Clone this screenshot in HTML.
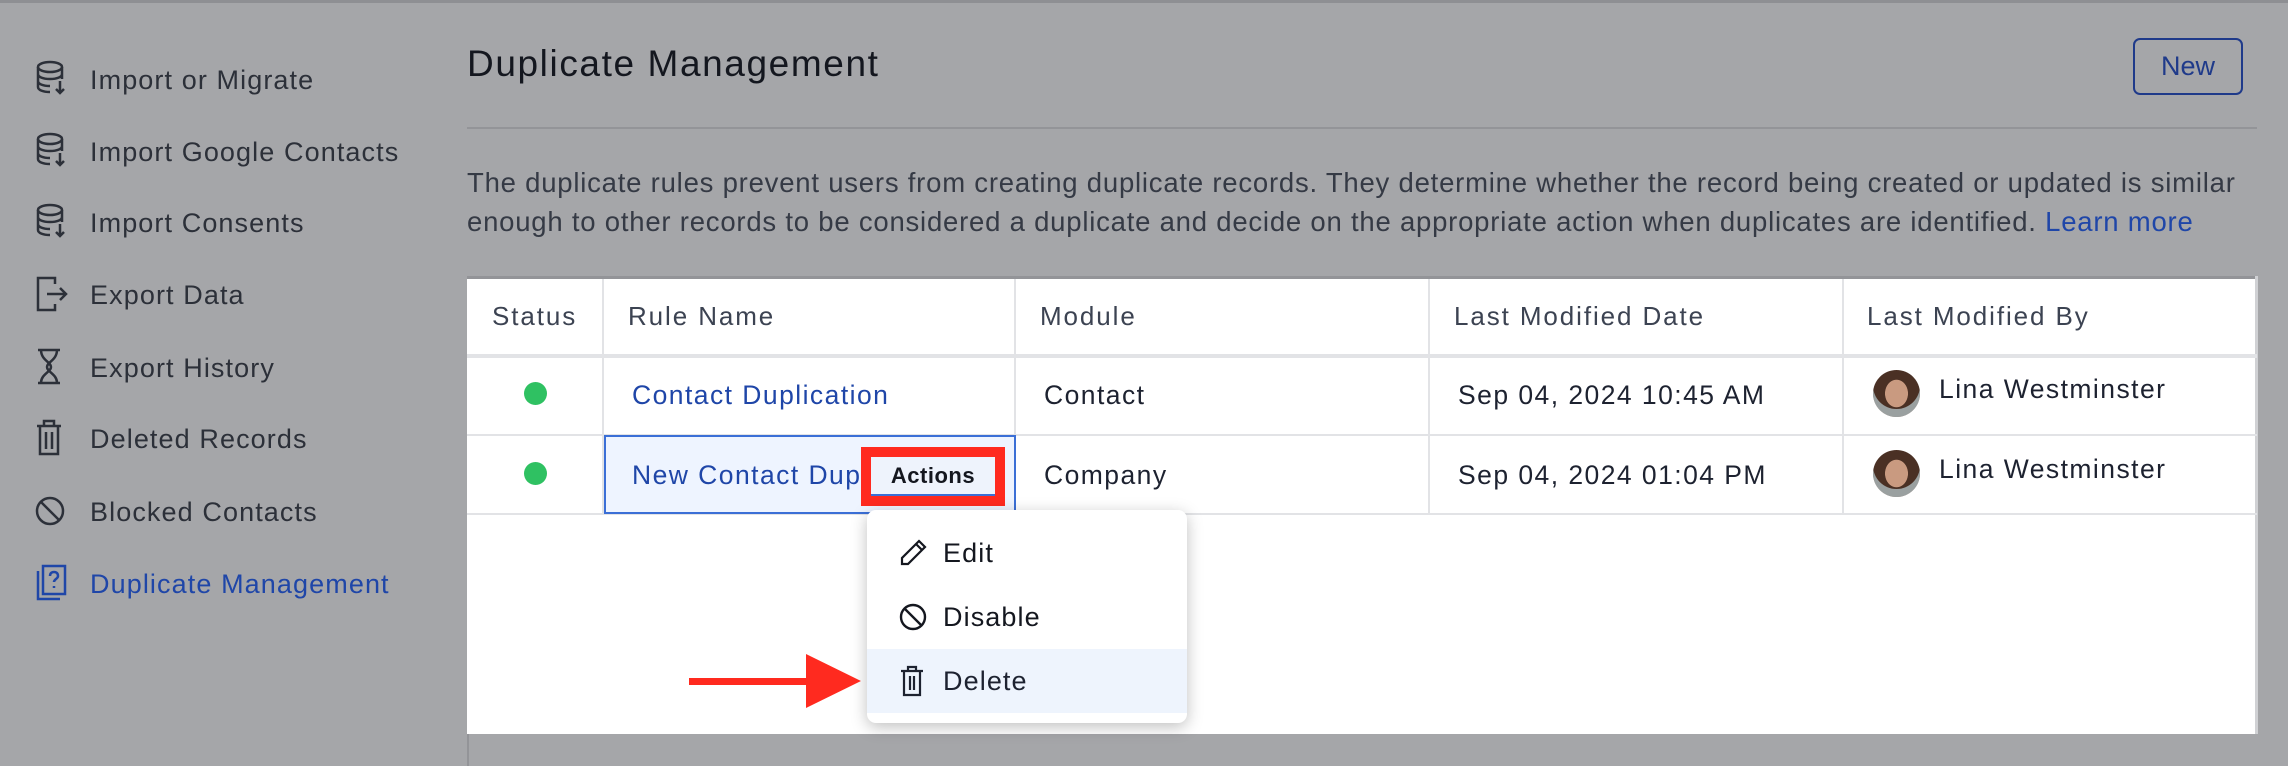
<!DOCTYPE html>
<html><head><meta charset="utf-8"><style>
*{box-sizing:border-box;margin:0;padding:0}
body{width:2288px;height:766px;overflow:hidden;background:#a5a6a9;font-family:"Liberation Sans",sans-serif;position:relative;color:#1d2230;letter-spacing:1.1px}
.abs{position:absolute;white-space:nowrap}
.top{left:0;top:0;width:2288px;height:3px;background:#8e8f93}
.side{left:35px;font-size:27px;color:#2c3039}
.side svg{position:absolute;left:0;top:-4px}
.side span{position:absolute;left:55px;top:0;line-height:34px}
h1{position:absolute;left:467px;top:43px;font-size:37px;font-weight:normal;color:#14171f;letter-spacing:1.6px}
.new{left:2133px;top:38px;width:110px;height:57px;border:2px solid #1f3a8a;border-radius:7px;color:#1f3a8a;font-size:27px;text-align:center;line-height:52px;letter-spacing:0}
.sep{left:467px;top:127px;width:1790px;height:2px;background:#939498}
.para{left:467px;top:163px;font-size:27.5px;line-height:39px;color:#353a45;letter-spacing:0.78px}
.para a{color:#1f46a8;text-decoration:none}
.tbl{left:467px;top:276px;width:1790px;height:458px;background:#fff;border-top:3px solid #939498}
.vl{background:#e2e3e6;width:2px}
.hl{background:#e2e3e6;height:2px}
.hd{font-size:26px;color:#3c4352;top:301px;letter-spacing:1.9px}
.cell{font-size:26.5px;color:#1d2230;letter-spacing:1.45px}
.link{color:#1f46a8}
.dot{width:23px;height:23px;border-radius:50%;background:#2fc162}
.av{width:47px;height:47px;border-radius:50%;background:radial-gradient(ellipse 40% 48% at 50% 50%,#c99a80 0 60%,#4a3024 62% 100%),#9aa0a0;background-size:100% 100%;box-shadow:inset 0 -8px 0 #9aa0a0}
.menu{left:867px;top:510px;width:320px;height:213px;background:#fff;border-radius:9px;box-shadow:0 4px 16px rgba(0,0,0,.25)}
.mi{font-size:27px;color:#14171f;left:943px;letter-spacing:1.1px}
</style></head><body>
<div class="abs top"></div>

<div class="abs side" style="top:63px"><svg width="34" height="40" viewBox="0 0 34 40" fill="none" stroke="#2c3039" stroke-width="2.5"><ellipse cx="15" cy="8" rx="12" ry="5"/><path d="M3 8v20c0 3 5 5 12 5M27 8v12M3 15c0 3 5 5 12 5s12-2 12-5M3 22c0 3 5 5 12 5"/><path d="M25 22v12M21 30l4 4 4-4"/></svg><span>Import or Migrate</span></div>
<div class="abs side" style="top:135px"><svg width="34" height="40" viewBox="0 0 34 40" fill="none" stroke="#2c3039" stroke-width="2.5"><ellipse cx="15" cy="8" rx="12" ry="5"/><path d="M3 8v20c0 3 5 5 12 5M27 8v12M3 15c0 3 5 5 12 5s12-2 12-5M3 22c0 3 5 5 12 5"/><path d="M25 22v12M21 30l4 4 4-4"/></svg><span>Import Google Contacts</span></div>
<div class="abs side" style="top:206px"><svg width="34" height="40" viewBox="0 0 34 40" fill="none" stroke="#2c3039" stroke-width="2.5"><ellipse cx="15" cy="8" rx="12" ry="5"/><path d="M3 8v20c0 3 5 5 12 5M27 8v12M3 15c0 3 5 5 12 5s12-2 12-5M3 22c0 3 5 5 12 5"/><path d="M25 22v12M21 30l4 4 4-4"/></svg><span>Import Consents</span></div>
<div class="abs side" style="top:278px"><svg width="34" height="40" viewBox="0 0 34 40" fill="none" stroke="#2c3039" stroke-width="2.5"><path d="M20 10V4H3v32h17v-6M12 20h19M25 14l6 6-6 6"/></svg><span>Export Data</span></div>
<div class="abs side" style="top:351px"><svg width="34" height="40" viewBox="0 0 34 40" fill="none" stroke="#2c3039" stroke-width="2.5"><path d="M3 3h22M3 36h22M6 3c0 10 10 12 10 17S6 27 6 36M22 3c0 10-10 12-10 17s10 7 10 16"/></svg><span>Export History</span></div>
<div class="abs side" style="top:422px"><svg width="34" height="40" viewBox="0 0 34 40" fill="none" stroke="#2c3039" stroke-width="2.5"><path d="M2 8h24M9 8V3h10v5M5 8v28h18V8M11 14v17M17 14v17"/></svg><span>Deleted Records</span></div>
<div class="abs side" style="top:495px"><svg width="34" height="40" viewBox="0 0 34 40" fill="none" stroke="#2c3039" stroke-width="2.5"><circle cx="15" cy="20" r="13"/><path d="M6 11l18 18"/></svg><span>Blocked Contacts</span></div>
<div class="abs side" style="top:567px;color:#1f46a8"><svg width="34" height="40" viewBox="0 0 34 40" fill="none" stroke="#1f46a8" stroke-width="2.5"><path d="M3 8v28h22"/><rect x="8" y="3" width="22" height="28"/><path d="M15 13c0-3 2-4 4-4s4 1 4 4-4 3-4 6M19 23v2"/></svg><span>Duplicate Management</span></div>

<h1>Duplicate Management</h1>
<div class="abs new">New</div>
<div class="abs sep"></div>
<div class="abs para">The duplicate rules prevent users from creating duplicate records. They determine whether the record being created or updated is similar<br>enough to other records to be considered a duplicate and decide on the appropriate action when duplicates are identified. <a>Learn more</a></div>

<div class="abs tbl"></div>
<div class="abs" style="left:467px;top:734px;width:2px;height:32px;background:#939498"></div>
<div class="abs" style="left:2255px;top:276px;width:3px;height:458px;background:#d0d1d4"></div>
<div class="abs hl" style="left:467px;top:354px;width:1790px;height:4px"></div>
<div class="abs hl" style="left:467px;top:434px;width:1790px"></div>
<div class="abs hl" style="left:467px;top:513px;width:1790px"></div>
<div class="abs vl" style="left:602px;top:279px;height:235px"></div>
<div class="abs vl" style="left:1014px;top:279px;height:235px"></div>
<div class="abs vl" style="left:1428px;top:279px;height:235px"></div>
<div class="abs vl" style="left:1842px;top:279px;height:235px"></div>

<div class="abs hd" style="left:492px">Status</div>
<div class="abs hd" style="left:628px">Rule Name</div>
<div class="abs hd" style="left:1040px">Module</div>
<div class="abs hd" style="left:1454px">Last Modified Date</div>
<div class="abs hd" style="left:1867px">Last Modified By</div>

<div class="abs dot" style="left:524px;top:382px"></div>
<div class="abs cell link" style="left:632px;top:380px">Contact Duplication</div>
<div class="abs cell" style="left:1044px;top:380px">Contact</div>
<div class="abs cell" style="left:1458px;top:380px">Sep 04, 2024 10:45 AM</div>
<div class="abs av" style="left:1873px;top:370px"></div>
<div class="abs cell" style="left:1939px;top:374px">Lina Westminster</div>

<div class="abs" style="left:604px;top:435px;width:412px;height:79px;background:#eef4ff;border:2px solid #3b6fd6"></div>
<div class="abs dot" style="left:524px;top:462px"></div>
<div class="abs cell link" style="left:632px;top:460px">New Contact Dup</div>
<div class="abs" style="left:861px;top:447px;width:144px;height:59px;border:10px solid #ff2a1f;background:#fff"></div>
<div class="abs" style="left:871px;top:457px;width:124px;height:39px;background:#eef3fc;border-bottom:2px solid #3b6fd6;font-size:22px;font-weight:bold;text-align:center;line-height:37px;color:#14171f;letter-spacing:0.5px">Actions</div>
<div class="abs cell" style="left:1044px;top:460px">Company</div>
<div class="abs cell" style="left:1458px;top:460px">Sep 04, 2024 01:04 PM</div>
<div class="abs av" style="left:1873px;top:450px"></div>
<div class="abs cell" style="left:1939px;top:454px">Lina Westminster</div>

<div class="abs menu"></div>
<div class="abs" style="left:867px;top:649px;width:320px;height:64px;background:#eef4fd"></div>
<svg class="abs" style="left:898px;top:538px" width="30" height="30" viewBox="0 0 30 30" fill="none" stroke="#14171f" stroke-width="2.2"><path d="M21 3l6 6L10 26H4v-6z M18 6l6 6"/></svg>
<div class="abs mi" style="top:538px">Edit</div>
<svg class="abs" style="left:898px;top:602px" width="30" height="30" viewBox="0 0 30 30" fill="none" stroke="#14171f" stroke-width="2.4"><circle cx="15" cy="15" r="12"/><path d="M6.5 6.5l17 17"/></svg>
<div class="abs mi" style="top:602px">Disable</div>
<svg class="abs" style="left:899px;top:665px" width="28" height="32" viewBox="0 0 28 32" fill="none" stroke="#1d2230" stroke-width="2.2"><path d="M2 6h22M9 6V2h8v4M5 6v24h16V6M11 11v14M15 11v14"/></svg>
<div class="abs mi" style="top:666px;color:#1d2230">Delete</div>

<div class="abs" style="left:689px;top:678px;width:122px;height:7px;background:#ff2a1f"></div>
<svg class="abs" style="left:806px;top:654px" width="56" height="54"><polygon points="0,0 55,27 0,54" fill="#ff2a1f"/></svg>
</body></html>
